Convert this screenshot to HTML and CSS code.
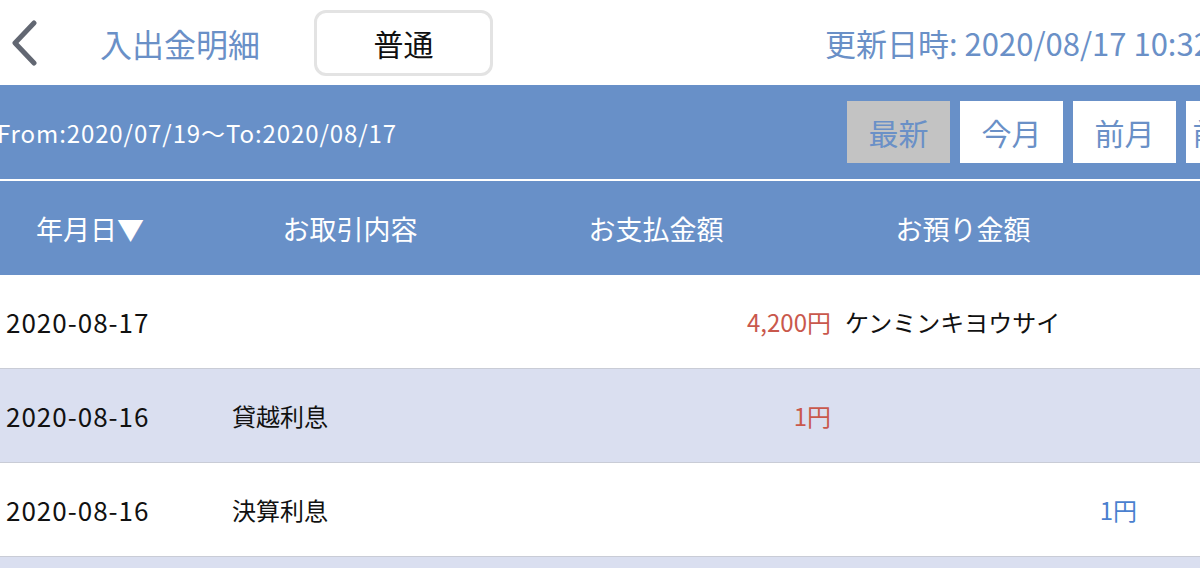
FILE: index.html
```html
<!DOCTYPE html>
<html lang="ja">
<head>
<meta charset="utf-8">
<title>入出金明細</title>
<link rel="stylesheet" href="styles.css">
</head>
<body>
<div class="page">
  <header class="topbar">
    <div class="back">
      <svg width="30" height="46" viewBox="0 0 30 46"><polyline points="24,3 5,23 24,43" fill="none" stroke="#626772" stroke-width="5" stroke-linecap="round" stroke-linejoin="round"/></svg>
    </div>
    <div class="title">入出金明細</div>
    <div class="seg">普通</div>
    <div class="updated">更新日時: 2020/08/17 10:32</div>
  </header>
  <div class="filterbar">
    <div class="range">From:2020/07/19～To:2020/08/17</div>
    <div class="btns">
      <div class="btn active">最新</div>
      <div class="btn">今月</div>
      <div class="btn">前月</div>
      <div class="btn">前々月</div>
    </div>
  </div>
  <div class="thead">
    <div class="th c1">年月日▼</div>
    <div class="th c2">お取引内容</div>
    <div class="th c3">お支払金額</div>
    <div class="th c4">お預り金額</div>
  </div>
  <div class="row">
    <div class="date">2020-08-17</div>
    <div class="desc"></div>
    <div class="pay">4,200円</div>
    <div class="dep"><span class="memo">ケンミンキヨウサイ</span></div>
  </div>
  <div class="row alt">
    <div class="date">2020-08-16</div>
    <div class="desc">貸越利息</div>
    <div class="pay">1円</div>
    <div class="dep"></div>
  </div>
  <div class="row">
    <div class="date">2020-08-16</div>
    <div class="desc">決算利息</div>
    <div class="pay"></div>
    <div class="dep"><span class="amt">1円</span></div>
  </div>
  <div class="row alt">
    <div class="date"></div>
    <div class="desc"></div>
    <div class="pay"></div>
    <div class="dep"></div>
  </div>
</div>
</body>
</html>
```
FILE: styles.css
```css
html, body {
  margin: 0;
  padding: 0;
  background: #ffffff;
}
body {
  width: 1200px;
  height: 568px;
  overflow: hidden;
  font-family: "Noto Sans CJK JP", "Noto Sans", sans-serif;
}
.page {
  width: 1200px;
}
.topbar {
  height: 85px;
  display: flex;
  align-items: center;
  white-space: nowrap;
  background: #ffffff;
}
.topbar > * {
  flex-shrink: 0;
}
.back {
  width: 40px;
  margin-left: 10px;
  display: flex;
  align-items: center;
  height: 46px;
}
.title {
  margin-left: 50px;
  font-size: 32px;
  color: #6a90c7;
  line-height: 1;
}
.seg {
  margin-left: 54px;
  width: 173px;
  height: 60px;
  border: 3px solid #e3e3e3;
  border-radius: 12px;
  display: flex;
  align-items: center;
  justify-content: center;
  font-size: 30px;
  color: #111111;
  box-sizing: content-box;
}
.updated {
  margin-left: 332px;
  font-size: 31px;
  color: #6a90c7;
  line-height: 1;
}
.filterbar {
  height: 94px;
  background: #6890c8;
  display: flex;
  align-items: center;
  justify-content: space-between;
  border-bottom: 2px solid #ffffff;
  white-space: nowrap;
  overflow: hidden;
}
.filterbar > * {
  flex-shrink: 0;
}
.range {
  margin-left: -3px;
  font-size: 24px;
  letter-spacing: 0.9px;
  color: #ffffff;
}
.btns {
  display: flex;
  gap: 10px;
  margin-right: -89px;
}
.btn {
  width: 103px;
  height: 62px;
  background: #ffffff;
  color: #6a90c7;
  font-size: 30px;
  display: flex;
  align-items: center;
  justify-content: center;
  white-space: nowrap;
}
.btn.active {
  background: #c3c3c3;
}
.thead {
  height: 94px;
  background: #6890c8;
  display: grid;
  grid-template-columns: 180px 340px 272px 342px;
  align-items: center;
}
.th {
  color: #ffffff;
  font-size: 27px;
  text-align: center;
  white-space: nowrap;
}
.row {
  height: 93px;
  border-bottom: 1px solid #c9ccd6;
  display: grid;
  grid-template-columns: 232px 400px 199px 306px;
  align-items: center;
  background: #ffffff;
  font-size: 24px;
  color: #111111;
  white-space: nowrap;
}
.row.alt {
  background: #dadff0;
}
.date {
  padding-left: 6px;
  font-size: 26px;
  letter-spacing: 1px;
}
.pay {
  text-align: right;
  color: #c9584c;
}
.dep {
  padding-left: 14px;
  display: flex;
  justify-content: space-between;
}
.memo {
  color: #111111;
}
.amt {
  margin-left: auto;
  color: #4a7fcf;
}
```
